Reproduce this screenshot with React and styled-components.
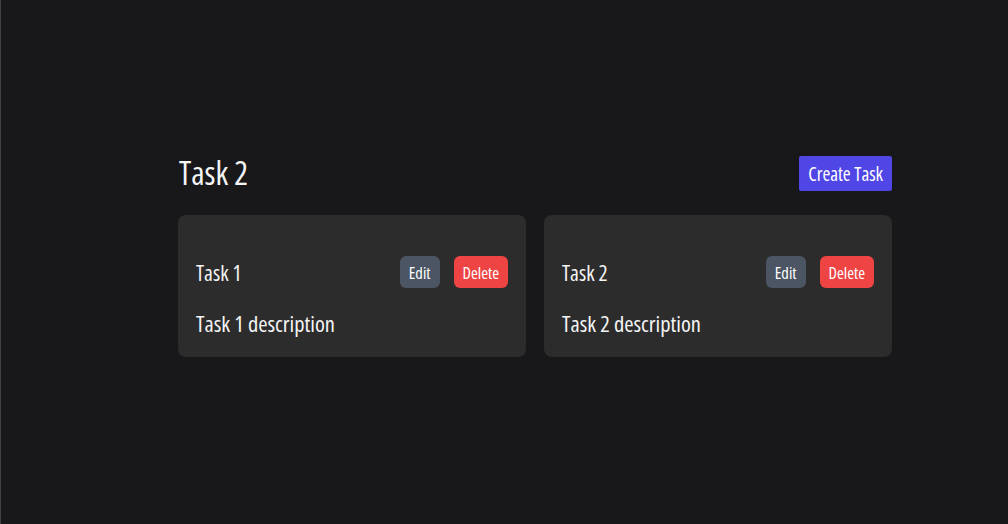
import React from 'react';
import styled, { createGlobalStyle } from 'styled-components';

const GlobalStyle = createGlobalStyle`
  html, body {
    margin: 0;
    padding: 0;
    background: #18181b;
  }
  body {
    font-family: 'Open Sans', 'Noto Sans', sans-serif;
    font-stretch: condensed;
    color: #f4f4f5;
  }
`;

const Page = styled.div`
  min-height: 524px;
  box-sizing: border-box;
  border-left: 1px solid #3f3f46;
  padding: 156px 116px 0 177px;
`;

const Header = styled.div`
  display: flex;
  align-items: center;
  justify-content: space-between;
  height: 35px;
  margin-bottom: 24px;
`;

const Title = styled.h1`
  margin: 0 0 0 1px;
  font-size: 32.5px;
  font-weight: 400;
  line-height: 1;
`;

const Button = styled.button`
  font-family: inherit;
  font-stretch: condensed;
  border: none;
  color: #fff;
  cursor: pointer;
  height: ${(p) => p.$height || 32}px;
  padding: 0 ${(p) => p.$padX || 9}px;
  font-size: ${(p) => p.$size || 16.5}px;
  border-radius: ${(p) => p.$radius ?? 6}px;
  background: ${(p) => p.$bg};
`;

const CardGrid = styled.div`
  display: grid;
  grid-template-columns: 1fr 1fr;
  gap: 18px;
`;

const Card = styled.div`
  background: #2c2c2c;
  border-radius: 8px;
  padding: 41px 18px 21px;
  height: 142px;
  box-sizing: border-box;
`;

const CardHead = styled.div`
  display: flex;
  align-items: center;
  justify-content: space-between;
  height: 32px;
`;

const CardTitle = styled.span`
  font-size: 21.5px;
`;

const Actions = styled.div`
  display: flex;
  gap: 14px;
`;

const Description = styled.p`
  margin: 24px 0 0;
  font-size: 22.5px;
  line-height: 24px;
`;

const tasks = [
  { id: 1, title: 'Task 1', description: 'Task 1 description' },
  { id: 2, title: 'Task 2', description: 'Task 2 description' },
];

const App = () => (
  <>
    <GlobalStyle />
    <Page>
      <Header>
        <Title>Task 2</Title>
        <Button $bg="#4f46e5" $height={35} $padX={9} $size={19} $radius={2}>
          Create Task
        </Button>
      </Header>
      <CardGrid>
        {tasks.map((task) => (
          <Card key={task.id}>
            <CardHead>
              <CardTitle>{task.title}</CardTitle>
              <Actions>
                <Button $bg="#4b5563">Edit</Button>
                <Button $bg="#ef4444">Delete</Button>
              </Actions>
            </CardHead>
            <Description>{task.description}</Description>
          </Card>
        ))}
      </CardGrid>
    </Page>
  </>
);

export default App;
